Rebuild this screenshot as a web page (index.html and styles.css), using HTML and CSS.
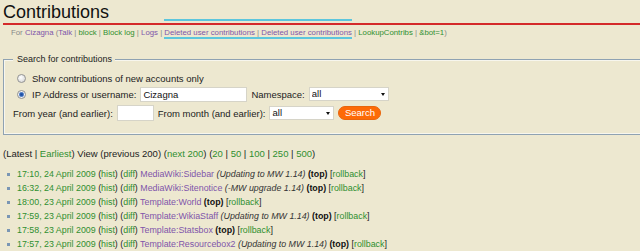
FILE: index.html
```html
<!doctype html>
<html>
  <head>
    <title>Contributions</title>
    <link rel="stylesheet" href="styles.css">
  </head>
  <body>
    <div class="page">
      <h1 class="first">Contributions</h1>
      <div class="sub">
        For <a class="v">Cizagna</a> (<a class="v">Talk</a> | <a class="g">block</a> | <a class="g">Block log</a> | <a class="v">Logs</a> | <span class="mark"><a class="v">Deleted user contributions</a> | <a class="v">Deleted user contributions</a></span> | <a class="g">LookupContribs</a> | <a class="g">&amp;bot=1</a>)
      </div>

      <fieldset class="search">
        <legend>Search for contributions</legend>
        <div class="row">
          <label class="opt"><input type="radio" name="target">Show contributions of new accounts only</label>
        </div>
        <div class="row">
          <label class="opt"><input type="radio" name="target" checked>IP Address or username:</label>
          <input class="text user" type="text" value="Cizagna">
          <label>Namespace:</label>
          <span class="sel ns"><select><option>all</option></select></span>
        </div>
        <div class="row row-date">
          <label>From year (and earlier):</label>
          <input class="text year" type="text" value="">
          <label>From month (and earlier):</label>
          <span class="sel month"><select><option>all</option></select></span>
          <button class="btn">Search</button>
        </div>
      </fieldset>

      <p class="nav">(Latest | <a class="g">Earliest</a>) View (previous 200) (<a class="g">next 200</a>) (<a class="g">20</a> | <a class="g">50</a> | <a class="g">100</a> | <a class="g">250</a> | <a class="g">500</a>)</p>

      <ul class="contribs">
        <li><a class="g">17:10, 24 April 2009</a> (<a class="g">hist</a>) (<a class="g">diff</a>) <a class="v">MediaWiki:Sidebar</a> <i>(Updating to MW 1.14)</i> <b>(top)</b> [<a class="g">rollback</a>]</li>
        <li><a class="g">16:32, 24 April 2009</a> (<a class="g">hist</a>) (<a class="g">diff</a>) <a class="v">MediaWiki:Sitenotice</a> <i>(-MW upgrade 1.14)</i> <b>(top)</b> [<a class="g">rollback</a>]</li>
        <li><a class="g">18:00, 23 April 2009</a> (<a class="g">hist</a>) (<a class="g">diff</a>) <a class="v">Template:World</a> <b>(top)</b> [<a class="g">rollback</a>]</li>
        <li><a class="g">17:59, 23 April 2009</a> (<a class="g">hist</a>) (<a class="g">diff</a>) <a class="v">Template:WikiaStaff</a> <i>(Updating to MW 1.14)</i> <b>(top)</b> [<a class="g">rollback</a>]</li>
        <li><a class="g">17:58, 23 April 2009</a> (<a class="g">hist</a>) (<a class="g">diff</a>) <a class="v">Template:Statsbox</a> <b>(top)</b> [<a class="g">rollback</a>]</li>
        <li><a class="g">17:57, 23 April 2009</a> (<a class="g">hist</a>) (<a class="g">diff</a>) <a class="v">Template:Resourcebox2</a> <i>(Updating to MW 1.14)</i> <b>(top)</b> [<a class="g">rollback</a>]</li>
      </ul>
    </div>
  </body>
</html>
```

FILE: styles.css
```css
html {
  overflow: hidden;
}
body {
  margin: 0;
  padding: 0;
  background-color: #ede8d0;
  font-family: "Liberation Sans", Arial, sans-serif;
  color: #222;
}
.page {
  padding: 0 0 0 3px;
}
a {
  cursor: pointer;
}
a.g { color: #2f8f2f; } /* links */
a.v { color: #7f55aa; } /* visited */

h1.first {
  margin: 0;
  padding: 2px 0 0 0;
  font-size: 18px;
  font-weight: normal;
  line-height: 21px;
  color: #111;
  border-bottom: 2px solid #d42a2a;
}

.sub {
  margin: 2px 0 0 8px;
  font-size: 7.8px;
  line-height: 12px;
  color: #888;
}
.sub .mark {
  position: relative;
}
.sub .mark::before,
.sub .mark::after {
  content: '';
  position: absolute;
  left: 0;
  right: 0;
  height: 2px;
  background-color: #5cc6dd;
}
.sub .mark::before {
  top: -9px;
}
.sub .mark::after {
  bottom: -2px;
}

fieldset.search {
  margin: 14px 0 0 0;
  padding: 6px 0 13px 9px;
  border: 1px solid #8fa2b2;
  border-right-width: 0;
  box-shadow: inset 1px 1px 0 #f7f6ee, inset 0 -1px 0 #f7f6ee;
}
fieldset.search legend {
  padding: 0 3px 0 4px;
  font-size: 9px;
  line-height: 12px;
  color: #222;
  background-color: #ede8d0;
}
.row {
  display: flex;
  align-items: center;
  gap: 4px;
  height: 14px;
  font-size: 9.5px;
  white-space: nowrap;
}
.row + .row {
  margin-top: 1px;
  height: 16px;
}
.row.row-date {
  margin-top: 3px;
}
.row label.opt {
  display: flex;
  align-items: center;
}
.row input[type=radio] {
  appearance: none;
  box-sizing: border-box;
  width: 9px;
  height: 9px;
  margin: 0 6px 0 4px;
  border: 1px solid #939393;
  border-radius: 50%;
  background: radial-gradient(circle at 40% 35%, #ffffff, #d0d0d0);
}
.row input[type=radio]:checked {
  background: radial-gradient(circle, #1d4c9c 0, #2f62b6 1.6px, #9bb6de 2.6px, #f4f4f4 3px, #cfcfcf 100%);
}
input.text {
  box-sizing: border-box;
  height: 15px;
  margin: 0;
  padding: 0 2px;
  border: 1px solid #d6d4c8;
  background-color: #fff;
  font-family: "Liberation Sans", Arial, sans-serif;
  font-size: 9.5px;
  color: #111;
  outline: none;
}
input.user { width: 107px; }
input.year { width: 37px; height: 16px; }

.sel {
  position: relative;
  display: block;
}
.sel select {
  appearance: none;
  display: block;
  box-sizing: border-box;
  height: 14px;
  margin: 0;
  padding: 0 0 0 2px;
  border: 1px solid #d6d4c8;
  border-radius: 0;
  background-color: #fff;
  font-family: "Liberation Sans", Arial, sans-serif;
  font-size: 9.5px;
  line-height: 12px;
  color: #111;
}
.sel::after {
  content: '';
  position: absolute;
  right: 4px;
  top: 6px;
  border-left: 2.5px solid transparent;
  border-right: 2.5px solid transparent;
  border-top: 3px solid #111;
}
.sel.ns select { width: 80px; }
.sel.month select { width: 65px; }

.btn {
  box-sizing: border-box;
  height: 14px;
  width: 43px;
  margin: 0;
  padding: 0;
  border: 1px solid #e8650c;
  border-radius: 7px;
  background-color: #fd6a07;
  color: #fff;
  font-family: "Liberation Sans", Arial, sans-serif;
  font-size: 9.5px;
  line-height: 12px;
}

.nav {
  margin: 12px 0 0 0;
  font-size: 9.5px;
  line-height: 13px;
}

ul.contribs {
  margin: 7px 0 0 0;
  padding: 0 0 0 4px;
  list-style: none;
}
ul.contribs li {
  font-size: 8.85px;
  line-height: 14px;
  white-space: nowrap;
}
ul.contribs li::before {
  content: '';
  display: inline-block;
  width: 3px;
  height: 3px;
  margin: 0 7px 1px 0;
  vertical-align: middle;
  background-color: #7a96b4;
}
ul.contribs li i { color: #333; }
ul.contribs li b { color: #111; }
```
